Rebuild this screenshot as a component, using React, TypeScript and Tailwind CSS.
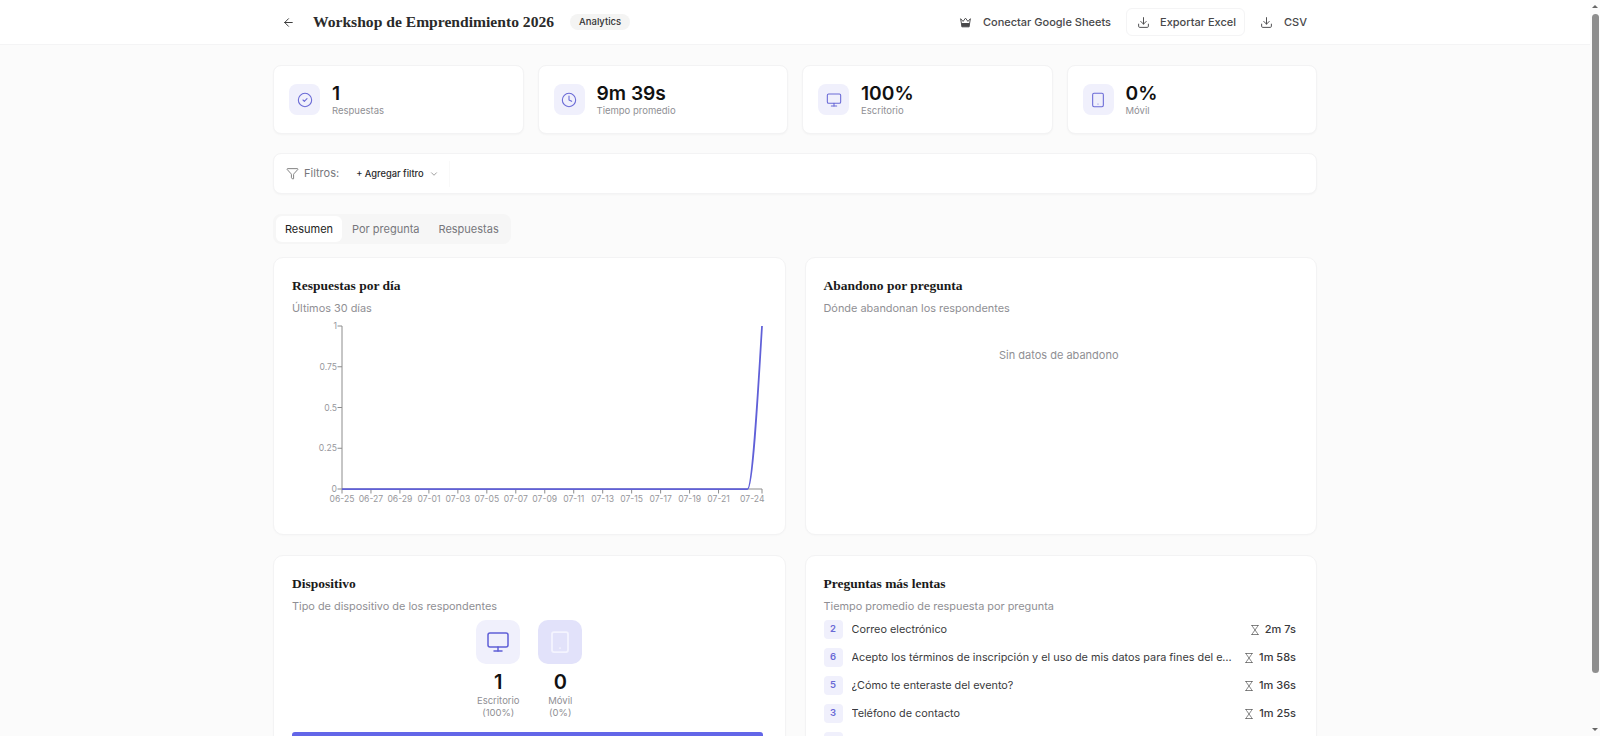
import {
  ArrowLeft,
  ChevronDown,
  CircleCheck,
  Clock,
  Download,
  Funnel,
  Monitor,
  Tablet,
} from 'lucide-react'
import type { ReactNode } from 'react'

const STATS = [
  { icon: CircleCheck, value: '1', label: 'Respuestas' },
  { icon: Clock, value: '9m 39s', label: 'Tiempo promedio' },
  { icon: Monitor, value: '100%', label: 'Escritorio' },
  { icon: Tablet, value: '0%', label: 'Móvil' },
]

const SLOW = [
  { n: 2, text: 'Correo electrónico', time: '2m 7s' },
  { n: 6, text: 'Acepto los términos de inscripción y el uso de mis datos para fines del evento y comunicaciones', time: '1m 58s' },
  { n: 5, text: '¿Cómo te enteraste del evento?', time: '1m 36s' },
  { n: 3, text: 'Teléfono de contacto', time: '1m 25s' },
]

const X_LABELS = ['06-25', '06-27', '06-29', '07-01', '07-03', '07-05', '07-07', '07-09', '07-11', '07-13', '07-15', '07-17', '07-19', '07-21']
const Y_LABELS = ['1', '0.75', '0.5', '0.25', '0']

function CrownIcon() {
  return (
    <svg width="13" height="13" viewBox="0 0 24 24" fill="none" stroke="currentColor" strokeWidth="1.75" strokeLinejoin="round" className="shrink-0">
      <path d="M3 5l4.5 5L12 4l4.5 6L21 5l-1.5 9h-15z" />
      <path d="M4.5 14h15l-.8 6H5.3z" fill="currentColor" />
    </svg>
  )
}

function HourglassIcon() {
  return (
    <svg width="12" height="12" viewBox="0 0 24 24" fill="none" stroke="currentColor" strokeWidth="1.6" strokeLinecap="round" className="shrink-0 mt-[4px] text-[#666]">
      <path d="M5 3h14M5 21h14M7 3v2l10 14v2M17 3v2L7 19v2" />
    </svg>
  )
}

function Card({ title, sub, className, children }: { title: string; sub: string; className: string; children: ReactNode }) {
  return (
    <div className={`bg-white rounded-[10px] border border-[#f3f3f4] shadow-[0_1px_2px_rgba(0,0,0,0.02)] pl-[18px] pr-[22px] pt-[19px] ${className}`}>
      <h3 className="font-['Liberation_Serif',serif] font-bold text-[13.5px] leading-[18px] text-[#1a1a1a]">{title}</h3>
      <p className="text-[10.9px] leading-[16px] mt-[5px] text-[#8f8f94]">{sub}</p>
      {children}
    </div>
  )
}

function LineChart() {
  // plot area: x 50..470, y 6..169
  const step = 420 / 29
  return (
    <svg width="470" height="200" className="block mt-[4px] overflow-visible font-['Inter',sans-serif]">
      <path d="M50 6V169H470" fill="none" stroke="#8c8c8c" strokeWidth="1" />
      {Y_LABELS.map((l, i) => (
        <g key={l}>
          <path d={`M45.5 ${6 + i * 40.75}H50`} stroke="#8c8c8c" />
          <text x="45" y={9 + i * 40.75} textAnchor="end" fontSize="8.6" fill="#97979c">{l}</text>
        </g>
      ))}
      {X_LABELS.map((l, i) => (
        <g key={l}>
          <path d={`M${50 + i * 2 * step} 169V173.5`} stroke="#8c8c8c" />
          <text x={50 + i * 2 * step} y="182" textAnchor="middle" fontSize="8.6" fill="#97979c">{l}</text>
        </g>
      ))}
      <path d="M470 169V173.5" stroke="#8c8c8c" />
      <text x="472.5" y="182" textAnchor="end" fontSize="8.6" fill="#97979c">07-24</text>
      <path d="M50 169H455.5C460.3 169 465.2 87.5 470 6" fill="none" stroke="#6060d8" strokeWidth="1.75" />
    </svg>
  )
}

export default function App() {
  return (
    <div className="h-screen flex overflow-hidden bg-[#fbfbfb] font-['Inter',sans-serif]">
      <div className="flex-1 min-w-0 overflow-hidden">
        <header className="h-[45px] bg-white border-b border-[#f4f4f5]">
          <div className="w-[1044px] mx-auto h-full flex items-center pl-[9px] pr-[10px]">
            <ArrowLeft size={13} strokeWidth={1.75} className="text-[#333]" />
            <h1 className="ml-[18px] font-['Liberation_Serif',serif] font-bold text-[15.6px] text-[#2a2a2a]">Workshop de Emprendimiento 2026</h1>
            <span className="ml-[16px] h-[16px] px-[9px] rounded-full bg-[#f4f4f3] text-[9.5px] font-medium leading-[16px] text-[#333]">Analytics</span>
            <div className="ml-auto flex items-center text-[11px] font-medium text-[#48484a]">
              <CrownIcon />
              <span className="ml-[11px]">Conectar Google Sheets</span>
              <div className="ml-[15px] h-[28px] w-[119px] pl-[10px] flex items-center rounded-[6px] border border-[#f4f4f5] bg-white">
                <Download size={13} strokeWidth={1.75} />
                <span className="ml-[10px]">Exportar Excel</span>
              </div>
              <Download size={13} strokeWidth={1.75} className="ml-[15px]" />
              <span className="ml-[11px]">CSV</span>
            </div>
          </div>
        </header>

        <main className="w-[1044px] mx-auto pt-[20px]">
          <div className="grid grid-cols-4 gap-[14px]">
            {STATS.map((s) => (
              <div key={s.label} className="h-[69px] bg-white rounded-[8px] border border-[#f3f3f4] shadow-[0_1px_2px_rgba(0,0,0,0.03)] flex items-center pl-[15px]">
                <div className="w-[31px] h-[31px] rounded-[8px] bg-[#f0f0fc] flex items-center justify-center text-[#6a6ad6]">
                  <s.icon size={16} strokeWidth={1.6} />
                </div>
                <div className="ml-[12px] pb-[1px]">
                  <p className="text-[19.2px] leading-[22px] font-semibold text-[#111]">{s.value}</p>
                  <p className="mt-[1px] text-[9.5px] leading-[12px] text-[#8f8f94]">{s.label}</p>
                </div>
              </div>
            ))}
          </div>

          <div className="mt-[19px] h-[41px] bg-white rounded-[8px] border border-[#f3f3f4] shadow-[0_1px_2px_rgba(0,0,0,0.03)] flex items-center pl-[12px]">
            <Funnel size={13} strokeWidth={1.5} className="text-[#666]" />
            <span className="ml-[5px] text-[11px] text-[#77777c]">Filtros:</span>
            <div className="ml-[7px] h-[26px] px-[10px] flex items-center border-r border-[#f9f9f9] text-[9.3px] font-medium text-[#2a2a2c]">
              + Agregar filtro
              <ChevronDown size={10} strokeWidth={1.5} className="ml-[5px] text-[#666]" />
            </div>
          </div>

          <div className="mt-[20px] w-[238px] h-[30px] rounded-[8px] bg-[#f6f6f6] flex items-center pl-[3px] text-[11px] text-[#77777c]">
            <span className="h-[26px] w-[66px] rounded-[6px] bg-white text-[#222] flex items-center justify-center">Resumen</span>
            <span className="ml-[10px]">Por pregunta</span>
            <span className="ml-[19px]">Respuestas</span>
          </div>

          <div className="mt-[13px] grid grid-cols-2 gap-x-[19px] gap-y-[20px]">
            <Card title="Respuestas por día" sub="Últimos 30 días" className="h-[278px]">
              <LineChart />
            </Card>
            <Card title="Abandono por pregunta" sub="Dónde abandonan los respondentes" className="h-[278px]">
              <p className="mt-[31px] text-center text-[11px] text-[#8f8f94]">Sin datos de abandono</p>
            </Card>

            <Card title="Dispositivo" sub="Tipo de dispositivo de los respondentes" className="h-[320px]">
              <div className="mt-[6px] pl-[4px] flex justify-center gap-[18px]">
                <div className="w-[44px] flex flex-col items-center">
                  <div className="w-[44px] h-[44px] rounded-[10px] bg-[#f0f0fc] flex items-center justify-center text-[#5f5fd6]">
                    <Monitor size={24} strokeWidth={1.5} />
                  </div>
                  <p className="mt-[6px] text-[20px] leading-[24px] font-semibold text-[#111]">1</p>
                  <p className="mt-[1px] text-[9.5px] leading-[12.3px] text-[#8f8f94] text-center">Escritorio<br />(100%)</p>
                </div>
                <div className="w-[44px] flex flex-col items-center">
                  <div className="w-[44px] h-[44px] rounded-[10px] bg-[#e2e2fa] flex items-center justify-center text-[#f4f4fe]">
                    <Tablet size={24} strokeWidth={1.75} />
                  </div>
                  <p className="mt-[6px] text-[20px] leading-[24px] font-semibold text-[#111]">0</p>
                  <p className="mt-[1px] text-[9.5px] leading-[12.3px] text-[#8f8f94] text-center">Móvil<br />(0%)</p>
                </div>
              </div>
              <div className="mt-[12px] h-[20px] rounded-[3px] bg-[#6366e8]" />
            </Card>
            <Card title="Preguntas más lentas" sub="Tiempo promedio de respuesta por pregunta" className="h-[320px]">
              <ul className="mt-[6px] mr-[-2px]">
                {SLOW.map((q) => (
                  <li key={q.n} className="h-[28px] flex items-start">
                    <span className="w-[19px] h-[19px] shrink-0 rounded-[4px] bg-[#f0f0fc] text-[#6a6ad6] text-[9.5px] font-semibold flex items-center justify-center">{q.n}</span>
                    <span className="ml-[9px] flex-1 min-w-0 truncate text-[10.85px] leading-[19px] text-[#3a3a3c]">{q.text}</span>
                    <span className="ml-[9px] shrink-0 flex items-start gap-[4px]">
                      <HourglassIcon />
                      <span className="text-[11px] leading-[19px] font-medium text-[#3a3a3c]">{q.time}</span>
                    </span>
                  </li>
                ))}
                <li className="h-[19px] w-[19px] rounded-[4px] bg-[#f0f0fc]" />
              </ul>
            </Card>
          </div>
        </main>
      </div>

      {/* scrollbar */}
      <div className="w-[10px] shrink-0 bg-[#fbfbfb] flex flex-col items-center pt-[5px] pb-[5px]">
        <div className="w-0 h-0 border-x-[3.5px] border-x-transparent border-b-[3px] border-b-[#666]" />
        <div className="mt-[6px] w-[7px] h-[659px] rounded-full bg-[#8e8e8e]" />
        <div className="mt-auto w-0 h-0 border-x-[3.5px] border-x-transparent border-t-[3px] border-t-[#666]" />
      </div>
    </div>
  )
}
